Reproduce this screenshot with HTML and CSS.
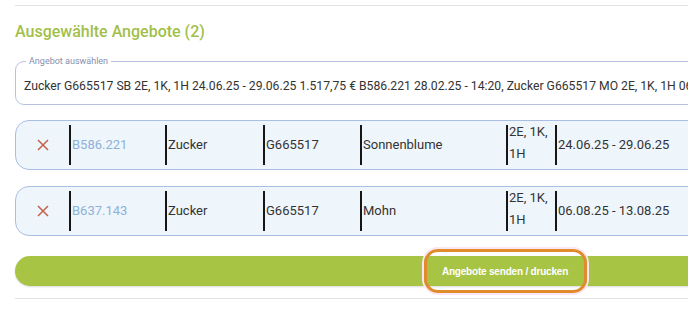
FILE: index.html
```html
<!DOCTYPE html>
<html lang="de">
<head>
    <meta charset="UTF-8">
    <meta name="viewport" content="width=device-width, initial-scale=1.0">
    <title>Ausgewählte Angebote</title>
    <link rel="stylesheet" href="styles.css">
</head>
<body>

<div class="panel">
    <hr class="rule">

    <h2 class="title">Ausgewählte Angebote (2)</h2>

    <fieldset class="picker">
        <legend>Angebot auswählen</legend>
        <div class="picker-value">Zucker G665517 SB 2E, 1K, 1H 24.06.25 - 29.06.25 1.517,75 € B586.221 28.02.25 - 14:20, Zucker G665517 MO 2E, 1K, 1H 06.08.25 - 13.08.25 1.482,30 € B637.143 28.02.25 - 14:22</div>
    </fieldset>

    <ul class="offers">
        <li class="offer">
            <button class="remove" type="button" aria-label="Entfernen">
                <svg width="12" height="12" viewBox="0 0 12 12"><path d="M1 1L11 11M11 1L1 11" stroke="#c4604c" stroke-width="1.5" fill="none"/></svg>
            </button>
            <span class="cell code">B586.221</span>
            <span class="cell">Zucker</span>
            <span class="cell">G665517</span>
            <span class="cell">Sonnenblume</span>
            <span class="cell rooms"><span>2E, 1K, 1H</span></span>
            <span class="cell">24.06.25 - 29.06.25</span>
        </li>
        <li class="offer">
            <button class="remove" type="button" aria-label="Entfernen">
                <svg width="12" height="12" viewBox="0 0 12 12"><path d="M1 1L11 11M11 1L1 11" stroke="#c4604c" stroke-width="1.5" fill="none"/></svg>
            </button>
            <span class="cell code">B637.143</span>
            <span class="cell">Zucker</span>
            <span class="cell">G665517</span>
            <span class="cell">Mohn</span>
            <span class="cell rooms"><span>2E, 1K, 1H</span></span>
            <span class="cell">06.08.25 - 13.08.25</span>
        </li>
    </ul>

    <button class="send" type="button"><span class="send-label">Angebote senden / drucken</span></button>

    <hr class="rule bottom">
</div>

</body>
</html>
```

FILE: styles.css
```css
html, body {
    overflow: hidden;
}

body {
    font-family: Roboto, "Liberation Sans", sans-serif;
    margin: 0;
    padding: 0;
    background-color: #fff;
    color: #333;
}

.panel {
    width: 980px;
    margin-left: 15px;
    padding-top: 5px;
}

.rule {
    margin: 0;
    border: none;
    border-top: 1px solid #e3e3e3;
}

.rule.bottom {
    margin-top: 12px;
}

.title {
    margin: 16px 0 0;
    font-size: 16px;
    line-height: 20px;
    font-weight: 500;
    color: #a2bf4a;
}

.picker {
    margin: 14px 0 0;
    padding: 12px 8px 10px 8px;
    border: 1px solid #b9c1e2;
    border-radius: 9px;
    min-width: 0;
}

.picker legend {
    margin-left: 2px;
    padding: 0 3px;
    font-size: 9px;
    line-height: 10px;
    color: #8590ae;
}

.picker-value {
    font-size: 12.2px;
    line-height: 16px;
    white-space: nowrap;
    overflow: hidden;
}

.offers {
    list-style: none;
    margin: 15px 0 0;
    padding: 0;
    display: flex;
    flex-direction: column;
    gap: 16px;
}

.offer {
    display: grid;
    grid-template-columns: 53px 96px 98px 97px 146px 49px 1fr;
    grid-template-rows: 40px;
    padding: 4px 0;
    box-sizing: border-box;
    height: 50px;
    border: 1px solid #a9bee2;
    border-radius: 14px;
    background-color: #eef6fc;
}

.remove {
    display: flex;
    align-items: center;
    justify-content: center;
    padding: 0;
    border: none;
    background: none;
    cursor: pointer;
}

.cell {
    display: flex;
    align-items: center;
    border-left: 2px solid #161616;
    padding-left: 1px;
    padding-bottom: 1px;
    font-size: 13px;
    line-height: 18px;
    white-space: nowrap;
}

.cell.code {
    color: #8fb1d9;
}

.cell.rooms {
    align-items: flex-start;
    white-space: normal;
    line-height: 22px;
    padding-bottom: 0;
}

.cell.rooms span {
    margin-top: -4px;
}

.send {
    display: flex;
    align-items: center;
    justify-content: center;
    width: 100%;
    height: 30px;
    margin-top: 20px;
    padding: 0;
    border: none;
    border-radius: 15px;
    background-color: #a8c444;
    box-shadow: 0 1px 2px rgba(0, 0, 0, 0.15);
    cursor: pointer;
}

.send-label {
    position: relative;
    font-family: "Liberation Sans", Arial, sans-serif;
    font-size: 10px;
    line-height: 13px;
    font-weight: bold;
    letter-spacing: -0.2px;
    color: #fff;
}

/* orange marker drawn round the button label */
.send-label::before {
    content: "";
    position: absolute;
    top: -16px;
    bottom: -15px;
    left: -18px;
    right: -19px;
    border: 3px solid #e08b2c;
    border-radius: 14px;
    box-shadow: 0 0 0 2px #fbe6f4;
}
```
